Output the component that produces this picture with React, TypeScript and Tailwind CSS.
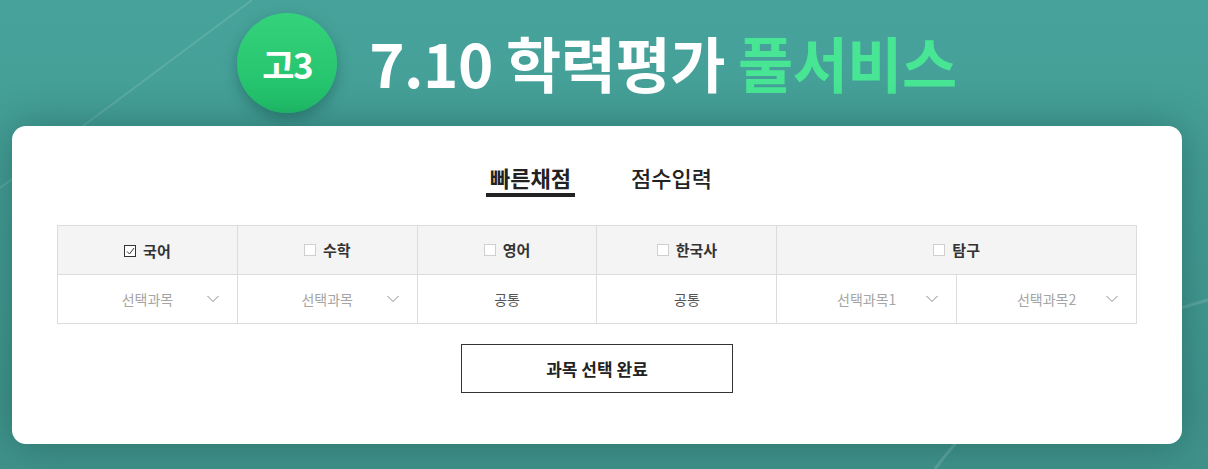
import React from "react";

const FONT = '"Noto Sans CJK KR", "Noto Sans", sans-serif';

function Chevron() {
  return (
    <svg width="12" height="7" viewBox="0 0 12 7" fill="none" className="absolute right-[18px] top-1/2 -translate-y-1/2">
      <path d="M0.5 0.5 L6 6 L11.5 0.5" stroke="#8a8a8a" strokeWidth="1" />
    </svg>
  );
}

function Check({ on }: { on?: boolean }) {
  return on ? (
    <span className="inline-flex w-[12px] h-[12px] border border-[#333] bg-white items-center justify-center">
      <svg width="9" height="8" viewBox="0 0 9 8" fill="none">
        <path d="M1 4.5 L3.5 7 L8 1" stroke="#333" strokeWidth="1" />
      </svg>
    </span>
  ) : (
    <span className="inline-block w-[12px] h-[12px] border border-[#cfcfcf] bg-white" />
  );
}

function Head({ label, on, span }: { label: string; on?: boolean; span?: number }) {
  return (
    <th colSpan={span} className="h-[49px] bg-[#f4f4f4] border border-[#dcdcdc] font-bold text-[15px] text-[#333]">
      <span className="inline-flex items-center gap-[7px]">
        <Check on={on} />
        {label}
      </span>
    </th>
  );
}

function Sel({ label }: { label: string }) {
  return (
    <td className="h-[49px] border border-[#dcdcdc] relative text-center text-[14px] text-[#a5a5a5]">
      {label}
      <Chevron />
    </td>
  );
}

function Fixed({ label }: { label: string }) {
  return <td className="h-[49px] border border-[#dcdcdc] text-center text-[14px] text-[#555]">{label}</td>;
}

export default function App() {
  return (
    <div
      className="relative w-full h-[469px] overflow-hidden bg-gradient-to-b from-[#46a39b] to-[#3f928a]"
      style={{ fontFamily: FONT }}
    >
      {/* decorative light strokes in the backdrop */}
      <svg className="absolute inset-0 pointer-events-none" width="1208" height="469" viewBox="0 0 1208 469" fill="none">
        <path d="M252 0 L0 188" stroke="rgba(255,255,255,0.12)" strokeWidth="2" />
        <path d="M1208 300 C1100 330 1000 380 935 469" stroke="rgba(255,255,255,0.14)" strokeWidth="3" />
      </svg>

      <header className="relative h-[126px] flex items-center justify-center gap-[32px] pr-[14px]">
        <div className="w-[100px] h-[100px] rounded-full bg-gradient-to-b from-[#35d27c] to-[#1fbf69] shadow-[0_6px_14px_rgba(0,60,50,0.35)] flex items-center justify-center">
          <span className="text-white font-bold text-[35px] tracking-[-1.5px] leading-none">고3</span>
        </div>
        <h1 className="text-[60px] font-bold leading-none tracking-[-0.5px] text-white pb-[2px]">
          7.10 학력평가 <span className="text-[#47e594]">풀서비스</span>
        </h1>
      </header>

      <main className="relative ml-[12px] w-[1170px] bg-white rounded-[14px] shadow-[0_0_40px_rgba(0,50,45,0.35)] pt-[35px] pb-[51px] flex flex-col items-center">
        <nav className="flex gap-[56px] items-start ml-[4px]">
          <div className="flex flex-col items-center">
            <span className="px-[4px] h-[32px] leading-[32px] text-[22px] font-bold text-[#222]">빠른채점</span>
            <span className="block w-full h-[4px] bg-[#222]" />
          </div>
          <span className="h-[32px] leading-[32px] text-[22px] font-medium text-[#222]">점수입력</span>
        </nav>

        <table className="mt-[28px] w-[1080px] table-fixed border-collapse">
          <tbody>
            <tr>
              <Head label="국어" on />
              <Head label="수학" />
              <Head label="영어" />
              <Head label="한국사" />
              <Head label="탐구" span={2} />
            </tr>
            <tr>
              <Sel label="선택과목" />
              <Sel label="선택과목" />
              <Fixed label="공통" />
              <Fixed label="공통" />
              <Sel label="선택과목1" />
              <Sel label="선택과목2" />
            </tr>
          </tbody>
        </table>

        <button className="mt-[20px] w-[272px] h-[49px] border border-[#333] bg-white text-[17px] font-bold text-[#222]">
          과목 선택 완료
        </button>
      </main>
    </div>
  );
}
